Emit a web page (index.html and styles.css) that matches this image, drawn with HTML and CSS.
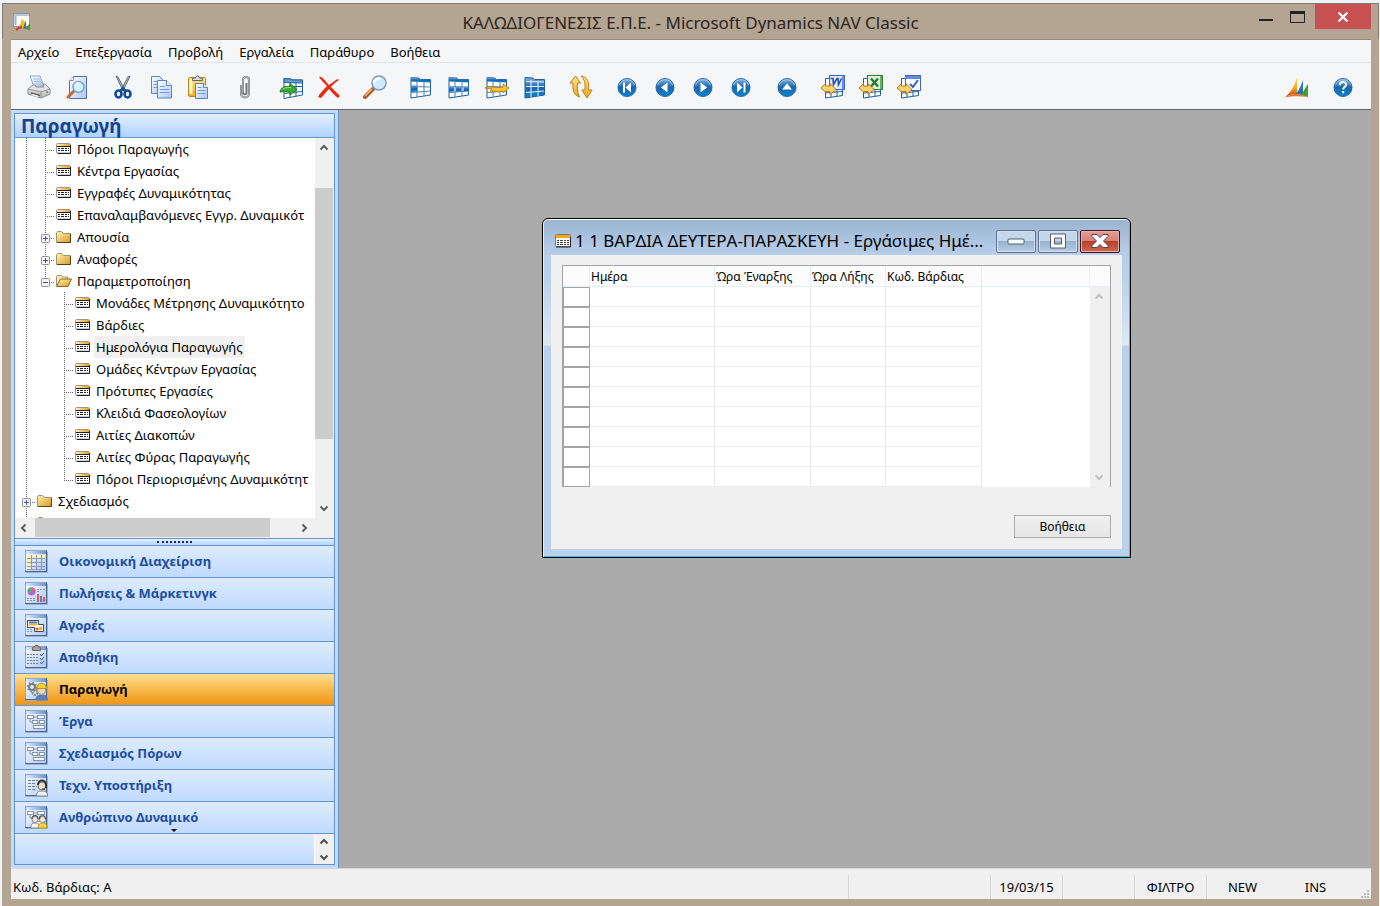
FILE: index.html
```html
<!DOCTYPE html>
<html lang="el">
<head>
    <meta charset="UTF-8">
    <meta name="viewport" content="width=device-width, initial-scale=1.0">
    <title>Microsoft Dynamics NAV Classic</title>
    <link rel="stylesheet" href="styles.css">
</head>
<body>
    <svg class="defs" width="0" height="0" aria-hidden="true">
        <defs>
            <linearGradient id="blue" x1="0" y1="0" x2="0" y2="1"><stop offset="0" stop-color="#7fb0dc"/><stop offset=".5" stop-color="#1a67ad"/><stop offset="1" stop-color="#0a84cc"/></linearGradient>
            <linearGradient id="sheet" x1="0" y1="0" x2="1" y2="1"><stop offset="0" stop-color="#fff"/><stop offset="1" stop-color="#a9c6ee"/></linearGradient>
            <linearGradient id="gold" x1="0" y1="0" x2="1" y2="1"><stop offset="0" stop-color="#fff3b8"/><stop offset="1" stop-color="#d99a1c"/></linearGradient>
            <linearGradient id="goldbar" x1="0" y1="0" x2="1" y2="0"><stop offset="0" stop-color="#fdf0c8"/><stop offset="1" stop-color="#f0a010"/></linearGradient>
            <linearGradient id="yellow" x1="0" y1="0" x2="0" y2="1"><stop offset="0" stop-color="#ffe68a"/><stop offset="1" stop-color="#f0a81c"/></linearGradient>
            <linearGradient id="gray" x1="0" y1="0" x2="0" y2="1"><stop offset="0" stop-color="#fafafa"/><stop offset="1" stop-color="#b4b4b4"/></linearGradient>
            <linearGradient id="bar" x1="0" y1="0" x2="1" y2="0"><stop offset="0" stop-color="#dfeafa"/><stop offset="1" stop-color="#6d93cc"/></linearGradient>
            <linearGradient id="flame" x1="0" y1="0" x2="0" y2="1"><stop offset="0" stop-color="#ffd94a"/><stop offset=".55" stop-color="#f7a81b"/><stop offset="1" stop-color="#c8321a"/></linearGradient>
        </defs>

        <!-- tree guides -->
        <symbol id="g-line" viewBox="0 0 19 22"><path d="M9.500 0V22" stroke="#666" stroke-dasharray="1 1"/></symbol>
        <symbol id="g-tee" viewBox="0 0 19 22"><path d="M9.500 0V22M11 12.500H19" stroke="#666" stroke-dasharray="1 1"/></symbol>
        <symbol id="g-end" viewBox="0 0 19 22"><path d="M9.500 0V13M11 12.500H19" stroke="#666" stroke-dasharray="1 1"/></symbol>
        <symbol id="g-plus" viewBox="0 0 19 22"><path d="M9.500 0V22M15 12.500H19" stroke="#666" stroke-dasharray="1 1"/><rect x="5.500" y="8.500" width="8" height="8" rx="1" fill="#f6f6f6" stroke="#919191"/><path d="M7 12.500H12M9.500 10V15" stroke="#3b56a3"/></symbol>
        <symbol id="g-minus" viewBox="0 0 19 22"><path d="M9.500 0V8M15 12.500H19" stroke="#666" stroke-dasharray="1 1"/><rect x="5.500" y="8.500" width="8" height="8" rx="1" fill="#f6f6f6" stroke="#919191"/><path d="M7 12.500H12" stroke="#3b56a3"/></symbol>
        <symbol id="t-form" viewBox="0 0 20 22"><rect x="1.500" y="5.500" width="14" height="10" rx="1" fill="#fff" stroke="#99958a"/><rect x="2" y="6" width="13" height="2" fill="url(#goldbar)"/><path d="M2 8.500H15" stroke="#222"/><path d="M3 10.500H14M3 12.500H14" stroke="#222" stroke-dasharray="2 1 3 1"/><path d="M2 14.500H15" stroke="#c3cfe6"/><path d="M15.500 7V15.500H3" fill="none" stroke="#222"/></symbol>
        <symbol id="t-folder" viewBox="0 0 20 22"><path d="M1.500 16.500V6.500l1-1h4l2 2h7v9z" fill="url(#gold)" stroke="#a8906a"/><path d="M15.500 8V16.500H2" fill="none" stroke="#55431c"/></symbol>
        <symbol id="t-open" viewBox="0 0 20 22"><path d="M1.500 15.500V6.500l1-1h4l1 1.500h5v3" fill="#fbe7a6" stroke="#a8906a"/><path d="M1.500 16.500l4-7.500h11l-3.500 7.500z" fill="url(#gold)" stroke="#8a6a26"/></symbol>

        <!-- toolbar -->
        <symbol id="i-print" viewBox="0 0 24 24"><path d="M3 1h10l4 11H7z" fill="url(#sheet)" stroke="#8fa9d0"/><path d="M6 4h7M7 6.500h7M8 9h7" stroke="#a9c0e6"/><path d="M1 14l5-4h2l1 2h8l-1-3h2l5 5v5l-9 4-13-4z" fill="url(#gray)" stroke="#8b8b8b"/><path d="M1 14l13 3 9-3M14 17v6" fill="none" stroke="#999"/><path d="M4 18l9 2.500" stroke="#555" stroke-width="1.500"/><path d="M4 20l7 2v-1.500l-6-1.500z" fill="#fff"/><circle cx="20" cy="17" r="1" fill="#49a33c"/></symbol>
        <symbol id="i-preview" viewBox="0 0 24 24"><path d="M8.500 1.500H21.500V23.500H4.500V5.500z" fill="url(#sheet)" stroke="#4c74b5"/><path d="M4.500 5.500h4v-4" fill="#fff" stroke="#7794c4"/><path d="M9 16L3 22" stroke="#c9692b" stroke-width="3" stroke-linecap="round"/><circle cx="13.500" cy="12" r="5.500" fill="#d3f0fd" stroke="#7aa6cc" stroke-width="1.500"/><path d="M10 11c1-2 2-3 4-3" fill="none" stroke="#fff" stroke-width="2"/></symbol>
        <symbol id="i-cut" viewBox="0 0 24 24"><path d="M5 1l2 1 7 13-2 1zM19 1l-2 1-7 13 2 1z" fill="#b6bfca" stroke="#48535f" stroke-width=".8"/><g fill="none" stroke="#0e4aa0" stroke-width="2.600"><ellipse cx="7.500" cy="19" rx="3" ry="3.500"/><ellipse cx="16.500" cy="19" rx="3" ry="3.500"/></g><path d="M9 16l3-3 3 3" fill="none" stroke="#0e4aa0" stroke-width="2"/></symbol>
        <symbol id="i-copy" viewBox="0 0 24 24"><path d="M2.500 1.500h8l4 4v13h-12z" fill="url(#sheet)" stroke="#5b83c6"/><path d="M4.500 6.500h6M4.500 9.500h6M4.500 12.500h4" stroke="#6c9ce0"/><path d="M8.500 5.500h9l5 5v12.500h-14z" fill="url(#sheet)" stroke="#5b83c6"/><path d="M17.500 5.500v5h5" fill="#fff" stroke="#5b83c6"/><path d="M11 11.500h5M11 14.500h9M11 17.500h9" stroke="#6c9ce0"/></symbol>
        <symbol id="i-paste" viewBox="0 0 24 24"><rect x="1.500" y="2.500" width="17" height="19" rx="1.500" fill="url(#yellow)" stroke="#b58a22"/><path d="M4 5v14" stroke="#fff4bf" stroke-width="3"/><path d="M5.500 5.500v-2l3-.5 1-2h2l1 2 3 .5v2z" fill="#ddd" stroke="#666"/><path d="M8.500 8.500h8l4 4v11h-12z" fill="url(#sheet)" stroke="#5b83c6"/><path d="M16.500 8.500v4h4" fill="#fff" stroke="#5b83c6"/><path d="M10.500 12.500h4M10.500 15.500h8M10.500 18.500h8" stroke="#6c9ce0"/></symbol>
        <symbol id="i-clip" viewBox="0 0 24 24"><path d="M8 10v8.500a4 4 0 0 0 8 0V5a3 3 0 0 0-6 0v12.500a1.500 1.500 0 0 0 3.500 0V8" fill="none" stroke="#777" stroke-width="2"/><path d="M8 10v8.500a4 4 0 0 0 8 0V5a3 3 0 0 0-6 0v12.500" fill="none" stroke="#d5d5d5" stroke-width=".7"/></symbol>
        <symbol id="i-grid" viewBox="0 0 24 24"><path d="M2 2.500l8 .5 1.500 1.500H21.500V20L2 23z" fill="#fff" stroke="#205f9f"/><path d="M2 2.500l8 .5 1.500 1.500h10v3L2 6.500z" fill="url(#blue)"/><path d="M2 11.500l19.500.500M2 17.500l19.500-1.500M8 6v16M15 7v14" fill="none" stroke="#4a80b8"/></symbol>
        <symbol id="i-post" viewBox="0 0 24 24"><g stroke="#205f9f"><path d="M5 3.500l7 .5 1 1h10.500V20L5 23.500z" fill="#fff"/><path d="M5 3.500l7 .5 1 1h10.500v3L5 7.500z" fill="#6a9dcc"/><path d="M5 18.500l18-2M17 8v13M11 8v14M13 11.500h10" fill="none"/></g><path d="M1 17c1-5 5-6 10-5.500V8.500l7 6-7 5.500v-3c-4-.5-7-.5-10 0z" fill="#39ad2d" stroke="#1d7a1a"/><path d="M4 14c2-1.500 5-1.500 8-1.500" fill="none" stroke="#a5e592"/></symbol>
        <symbol id="i-delete" viewBox="0 0 24 24"><path d="M2 2c3-2 7 5 10 8 3-2 6-5 9-6l1 1c-3 2-6 4-8 7 3 3 6 6 9 9l-2 2c-3-2-6-6-9-9-3 3-5 6-8 9l-3-1c2-4 6-8 9-11-3-3-6-6-8-9z" fill="#ea2b10"/></symbol>
        <symbol id="i-zoom" viewBox="0 0 24 24"><path d="M10 14L2 22" stroke="#b15d2a" stroke-width="4" stroke-linecap="round"/><path d="M9 14L2 21" stroke="#f4b57c" stroke-width="1.500"/><circle cx="16" cy="8" r="7" fill="#c9edff" stroke="#8e94ba" stroke-width="1.500"/><path d="M11 8c0-3 3-5 6-4" fill="none" stroke="#fff" stroke-width="2.500"/></symbol>
        <symbol id="i-t1" viewBox="0 0 24 24"><use href="#i-grid"/><path d="M2 10l6.500.500v6L2 17z" fill="url(#blue)"/></symbol>
        <symbol id="i-t2" viewBox="0 0 24 24"><use href="#i-grid"/><path d="M2 11.500h5v5l-5 .5zM9 11.500h5.500v5l-5.500.5zM16.500 12h5v4l-5 .5z" fill="url(#blue)"/></symbol>
        <symbol id="i-t3" viewBox="0 0 24 24"><use href="#i-grid"/><path d="M0 13c5-3 11 1 18-1V9l6 4-6 5v-2c-6 1.500-9 0-13 0l2-2z" fill="#ffc52e" stroke="#b97b0a" stroke-width=".9"/></symbol>
        <symbol id="i-t4" viewBox="0 0 24 24"><path d="M2 2.500l8 .5 1.500 1.500H21.500V20L2 23z" fill="url(#blue)" stroke="#205f9f"/><path d="M3 6.500l18 .5M3 11.500h18M3 17.500l18-1.500M8 5v17M15 6v15" fill="none" stroke="#eaf3fb"/></symbol>
        <symbol id="i-sort" viewBox="0 0 24 24"><g fill="url(#yellow)" stroke="#bd7b12"><path d="M6.500 1l5 7h-3c-.5 5-.5 9 2 14-6-2-7-7-6.500-14H1z"/><path d="M12 1c7 1 8 6 7.500 14H23l-5 8-5-8h3c.5-6 0-10-4-14z"/></g></symbol>
        <symbol id="i-disc" viewBox="0 0 24 24"><circle cx="12" cy="12.500" r="9" fill="url(#blue)" stroke="#2367a6"/><path d="M4.500 10a8 8 0 0 1 15 0" fill="none" stroke="#c6def2" stroke-opacity=".7"/></symbol>
        <symbol id="i-first" viewBox="0 0 24 24"><use href="#i-disc"/><path d="M8 7.500h2v10H8zM16 7.500v10l-5.500-5z" fill="#fff"/></symbol>
        <symbol id="i-prev" viewBox="0 0 24 24"><use href="#i-disc"/><path d="M14.500 7.500v10l-6.500-5z" fill="#fff"/></symbol>
        <symbol id="i-next" viewBox="0 0 24 24"><use href="#i-disc"/><path d="M9.500 7.500v10l6.500-5z" fill="#fff"/></symbol>
        <symbol id="i-last" viewBox="0 0 24 24"><use href="#i-disc"/><path d="M14.500 7.500h2v10h-2zM8 7.500v10l5.500-5z" fill="#fff"/></symbol>
        <symbol id="i-up" viewBox="0 0 24 24"><use href="#i-disc"/><path d="M7 14.500h10l-5-6z" fill="#fff"/></symbol>
        <symbol id="i-export" viewBox="0 0 24 24"><path d="M4.500 3.500h17v17l-17 2.500z" fill="#fff" stroke="#205f9f"/><path d="M5 18l16-1.500M10 15v7M16 15v6" fill="none" stroke="#205f9f"/></symbol>
        <symbol id="i-arrows" viewBox="0 0 24 24"><path d="M0 13l4.500-4.500V11H9V8.500l6 6-6 5v-3H5v1z" fill="#ffd36a" stroke="#a96a10" stroke-width=".9"/></symbol>
        <symbol id="i-word" viewBox="0 0 24 24"><use href="#i-export"/><rect x="8.500" y=".5" width="15" height="14" fill="#dfe9fc" stroke="#3f66c4"/><path d="M22 1v13" stroke="#6d90dc" stroke-width="2"/><path d="M9.500 3.500H12l.5 6 3.500-6h1l.5 6 3-6" fill="none" stroke="#2b4eaf" stroke-width="1.600"/><use href="#i-arrows"/></symbol>
        <symbol id="i-excel" viewBox="0 0 24 24"><use href="#i-export"/><rect x="8.500" y=".5" width="15" height="14" fill="#dff1dc" stroke="#2f7d32"/><path d="M22 1v13" stroke="#6cae68" stroke-width="2"/><path d="M12 3.500l7 8M19 3.500l-7 8" stroke="#257a2a" stroke-width="2.300"/><use href="#i-arrows"/></symbol>
        <symbol id="i-task" viewBox="0 0 24 24"><use href="#i-export"/><rect x="8.500" y=".5" width="15" height="15" fill="#fff" stroke="#3f66c4"/><path d="M8 1h15v3H8z" fill="#5f8bea"/><path d="M13 9l3 3 5-7" fill="none" stroke="#2d62c4" stroke-width="2"/><use href="#i-arrows"/></symbol>
        <symbol id="i-nav" viewBox="0 0 24 24"><path d="M0 22c5-4 9-9 12-20v17c-4 0-8 1-12 3z" fill="url(#flame)"/><path d="M11 19c3-4 5-8 7-14v15z" fill="#2573b8"/><path d="M16 20c3-4 4-7 7-11v13z" fill="#4c9a2a"/><path d="M0 22.500c6-4 13-5 22-.5-7-1-15-1-22 .5z" fill="#e0762a"/></symbol>
        <symbol id="i-help" viewBox="0 0 24 24"><use href="#i-disc"/><path d="M8.800 10.200c0-4.200 6.600-4 6.400-.5-.1 2-3 2.300-3 4.800" fill="none" stroke="#fff" stroke-width="2"/><rect x="11" y="16" width="2.200" height="2.200" fill="#fff"/></symbol>

        <!-- departments -->
        <symbol id="n-frame" viewBox="0 0 24 24"><path d="M2 23.500h21.500V3" fill="none" stroke="#9bb1d4"/><rect x="1.500" y="1.500" width="21" height="21" fill="url(#sheet)" stroke="#4b678f"/><rect x="2" y="2" width="20" height="3" fill="url(#bar)"/><path d="M1.500 22V1.500H22" fill="none" stroke="#8aa5cf"/></symbol>
        <symbol id="n-finance" viewBox="0 0 24 24"><use href="#n-frame"/><path d="M3 6h18v4H3zM3 10h4v10H3z" fill="#fbf3b4"/><path d="M3 9.500h18M3 13.500h18M3 17.500h18M3 20.500h18M7.500 6v15M12.500 6v15M17.500 6v15" stroke="#8c9aba"/></symbol>
        <symbol id="n-sales" viewBox="0 0 24 24"><use href="#n-frame"/><circle cx="7.500" cy="10.500" r="4" fill="#a96fd0"/><path d="M7.500 10.500v-4a4 4 0 0 1 4 4z" fill="#e35d8b"/><path d="M7.500 10.500h-4a4 4 0 0 1 4-4z" fill="#4bb37a"/><path d="M13 8.500h8M13 10.500h3M3 17.500h8M3 19.500h8" stroke="#8696b5" stroke-dasharray="2 1"/><path d="M14 21v-8M20 21v-5" stroke="#d6604a" stroke-width="2"/><path d="M17 21v-6" stroke="#6f6fce" stroke-width="2"/></symbol>
        <symbol id="n-purchase" viewBox="0 0 24 24"><use href="#n-frame"/><path d="M3 16.500h6M3 18.500h6" stroke="#8696b5" stroke-dasharray="2 1"/><rect x="3.500" y="7.500" width="11" height="7" fill="#fff" stroke="#444b58"/><path d="M5 9.500h8" stroke="#3b78d0" stroke-width="2"/><path d="M5 11.500h8" stroke="#f0b41c" stroke-width="2"/><path d="M15 11.500h4.500v7h-9V15" fill="#fff" stroke="#444b58"/><circle cx="13" cy="16" r="1.500" fill="#e8502e"/><circle cx="16.500" cy="15.500" r="2" fill="#f2b51c"/></symbol>
        <symbol id="n-store" viewBox="0 0 24 24"><use href="#n-frame"/><path d="M3 9.500h11M3 12.500h11M3 15.500h11M3 18.500h11" stroke="#6f81a8" stroke-dasharray="2 1"/><path d="M16 9l1.500 2 2.500-3M16 13l1.500 2 2.500-3M16 17l1.500 2 2.500-3" fill="none" stroke="#4c5f8a"/><path d="M8.500 5.500v-3l2-.5.500-1.500h3l.5 1.500 2 .5v3z" fill="#a9a196" stroke="#6e675d"/></symbol>
        <symbol id="n-prod" viewBox="0 0 24 24"><use href="#n-frame"/><circle cx="8" cy="10" r="3" fill="none" stroke="#7b7f86" stroke-width="2"/><circle cx="8" cy="10" r="4.500" fill="none" stroke="#7b7f86" stroke-width="1.500" stroke-dasharray="1.500 2"/><circle cx="11" cy="15.500" r="2.500" fill="none" stroke="#7b7f86" stroke-width="2" stroke-dasharray="2 1"/><path d="M12 23c0-4 2-5 5.500-5s6 1 6 5z" fill="#5d7fc0" stroke="#5a75ae"/><circle cx="17.500" cy="13.500" r="4" fill="#f2d7b0" stroke="#998"/><path d="M12.500 11.500c0-7 10-7 10 0z" fill="#f8cf2e" stroke="#b8951f"/></symbol>
        <symbol id="n-jobs" viewBox="0 0 24 24"><use href="#n-frame"/><g fill="#fff" stroke="#8395ae"><path d="M6 9v4h3M9 8h5M13 14h3" fill="none"/><rect x="3.500" y="6.500" width="6" height="3"/><rect x="13.500" y="6.500" width="7" height="3"/><rect x="8.500" y="11.500" width="5" height="3"/><rect x="15.500" y="11.500" width="5" height="3"/><rect x="9.500" y="16.500" width="11" height="3"/></g></symbol>
        <symbol id="n-service" viewBox="0 0 24 24"><use href="#n-frame"/><path d="M4 7.500h10M4 10.500h7M4 13.500h9M4 16.500h7" stroke="#6f81a8" stroke-dasharray="3 1"/><path d="M12.500 23c0-4 2-5 5.500-5s5.500 1 5.500 5z" fill="#eef0f2" stroke="#888"/><circle cx="18" cy="13" r="4" fill="#f1dcc4" stroke="#777"/><path d="M14 12c0-6 8-6 8 0v3" fill="none" stroke="#333" stroke-width="2"/><path d="M18 16h3" stroke="#222"/></symbol>
        <symbol id="n-hr" viewBox="0 0 24 24"><use href="#n-jobs"/><path d="M7 23c0-4 1-5 4.500-5s4 1 4 5z" fill="#f2f2f2" stroke="#888"/><path d="M14.500 23c0-4 1-5 4-5s4.500 1 4.500 5z" fill="#f7d43a" stroke="#b8951f"/><circle cx="11" cy="14.500" r="3" fill="#f5e8d8" stroke="#888"/><circle cx="18.500" cy="14.500" r="3" fill="#f5e8d8" stroke="#888"/><path d="M8 14c0-5 6-5 6 0M15.500 14c0-5 6-5 6 0" fill="none" stroke="#444"/></symbol>

        <!-- scroll arrows -->
        <symbol id="a-up" viewBox="0 0 10 10"><path d="M1.500 6.500L5 3l3.500 3.500" fill="none" stroke="currentColor" stroke-width="2"/></symbol>
        <symbol id="a-down" viewBox="0 0 10 10"><path d="M1.500 3.500L5 7l3.500-3.500" fill="none" stroke="currentColor" stroke-width="2"/></symbol>
        <symbol id="a-left" viewBox="0 0 10 10"><path d="M6.500 1.500L3 5l3.500 3.500" fill="none" stroke="currentColor" stroke-width="2"/></symbol>
        <symbol id="a-right" viewBox="0 0 10 10"><path d="M3.500 1.500L7 5 3.500 8.500" fill="none" stroke="currentColor" stroke-width="2"/></symbol>
    </svg>

    <div class="window">
        <header class="titlebar">
            <svg class="app-icon" viewBox="0 0 20 20"><rect x="1.500" y="1.500" width="16" height="13" fill="#fff" stroke="#8a97a8"/><path d="M2 3h15" stroke="#b9c6d6" stroke-width="2"/><path d="M3.500 4v9" stroke="#8fb2de" stroke-width="2"/><path d="M4 18c3-2 5-6 6-12v10z" fill="#f5a71b"/><path d="M10 7l3 3v6h-3z" fill="#f5c21b"/><path d="M4 18c2-2 4-3 6-3" fill="none" stroke="#cf3b1c" stroke-width="2"/><path d="M11 16l3-8v9z" fill="#2573b8"/><path d="M13 17l5-6v7z" fill="#4c9a2a"/></svg>
            <h1>ΚΑΛΩΔΙΟΓΕΝΕΣΙΣ Ε.Π.Ε. - Microsoft Dynamics NAV Classic</h1>
            <div class="window-buttons">
                <button class="win-min" aria-label="Ελαχιστοποίηση"><svg width="14" height="3"><rect width="14" height="2" fill="#222"/></svg></button>
                <button class="win-max" aria-label="Μεγιστοποίηση"><svg width="15" height="12"><path d="M.5 1V11.500H14.500V1M0 1.500H15" fill="none" stroke="#222"/><rect width="15" height="3" fill="#222"/></svg></button>
                <button class="win-close" aria-label="Κλείσιμο"><svg width="12" height="10"><path d="M1.500.5l9 9M10.500.5l-9 9" stroke="#fff" stroke-width="2.200"/></svg></button>
            </div>
        </header>

        <div class="frame">
            <nav class="menu">
                <a href="#">Αρχείο</a>
                <a href="#">Επεξεργασία</a>
                <a href="#">Προβολή</a>
                <a href="#">Εργαλεία</a>
                <a href="#">Παράθυρο</a>
                <a href="#">Βοήθεια</a>
            </nav>

            <div class="toolbar">
                <div class="group">
                    <button aria-label="Εκτύπωση"><svg><use href="#i-print"/></svg></button>
                    <button aria-label="Προεπισκόπηση"><svg><use href="#i-preview"/></svg></button>
                </div>
                <div class="group">
                    <button aria-label="Αποκοπή"><svg><use href="#i-cut"/></svg></button>
                    <button aria-label="Αντιγραφή"><svg><use href="#i-copy"/></svg></button>
                    <button aria-label="Επικόλληση"><svg><use href="#i-paste"/></svg></button>
                </div>
                <div class="group">
                    <button aria-label="Συνημμένα"><svg><use href="#i-clip"/></svg></button>
                </div>
                <div class="group">
                    <button aria-label="Εισαγωγή"><svg><use href="#i-post"/></svg></button>
                    <button aria-label="Διαγραφή"><svg><use href="#i-delete"/></svg></button>
                </div>
                <div class="group">
                    <button aria-label="Εύρεση"><svg><use href="#i-zoom"/></svg></button>
                </div>
                <div class="group">
                    <button aria-label="Φίλτρο πεδίου"><svg><use href="#i-t1"/></svg></button>
                    <button aria-label="Φίλτρο πίνακα"><svg><use href="#i-t2"/></svg></button>
                    <button aria-label="Φίλτρο ροής"><svg><use href="#i-t3"/></svg></button>
                    <button aria-label="Εμφάνιση όλων"><svg><use href="#i-t4"/></svg></button>
                </div>
                <div class="group">
                    <button aria-label="Ταξινόμηση"><svg><use href="#i-sort"/></svg></button>
                </div>
                <div class="group">
                    <button aria-label="Πρώτη"><svg><use href="#i-first"/></svg></button>
                    <button aria-label="Προηγούμενη"><svg><use href="#i-prev"/></svg></button>
                    <button aria-label="Επόμενη"><svg><use href="#i-next"/></svg></button>
                    <button aria-label="Τελευταία"><svg><use href="#i-last"/></svg></button>
                </div>
                <div class="group">
                    <button aria-label="Λίστα"><svg><use href="#i-up"/></svg></button>
                </div>
                <div class="group">
                    <button aria-label="Word"><svg><use href="#i-word"/></svg></button>
                    <button aria-label="Excel"><svg><use href="#i-excel"/></svg></button>
                    <button aria-label="Εργασία"><svg><use href="#i-task"/></svg></button>
                </div>
                <div class="group right">
                    <button aria-label="Dynamics NAV"><svg><use href="#i-nav"/></svg></button>
                </div>
                <div class="group">
                    <button aria-label="Βοήθεια"><svg><use href="#i-help"/></svg></button>
                </div>
            </div>

            <main class="workspace">
                <aside class="sidebar">
                    <div class="pane">
                        <h2>Παραγωγή</h2>
                        <div class="tree-box">
                            <div class="tree-view">
                                <ul class="tree">
                                    <li><svg class="guide"><use href="#g-line"/></svg><svg class="guide"><use href="#g-tee"/></svg><svg class="node"><use href="#t-form"/></svg><a href="#">Πόροι Παραγωγής</a></li>
                                    <li><svg class="guide"><use href="#g-line"/></svg><svg class="guide"><use href="#g-tee"/></svg><svg class="node"><use href="#t-form"/></svg><a href="#">Κέντρα Εργασίας</a></li>
                                    <li><svg class="guide"><use href="#g-line"/></svg><svg class="guide"><use href="#g-tee"/></svg><svg class="node"><use href="#t-form"/></svg><a href="#">Εγγραφές Δυναμικότητας</a></li>
                                    <li><svg class="guide"><use href="#g-line"/></svg><svg class="guide"><use href="#g-tee"/></svg><svg class="node"><use href="#t-form"/></svg><a href="#">Επαναλαμβανόμενες Εγγρ. Δυναμικότ</a></li>
                                    <li><svg class="guide"><use href="#g-line"/></svg><svg class="guide"><use href="#g-plus"/></svg><svg class="node"><use href="#t-folder"/></svg><a href="#">Απουσία</a></li>
                                    <li><svg class="guide"><use href="#g-line"/></svg><svg class="guide"><use href="#g-plus"/></svg><svg class="node"><use href="#t-folder"/></svg><a href="#">Αναφορές</a></li>
                                    <li><svg class="guide"><use href="#g-line"/></svg><svg class="guide"><use href="#g-minus"/></svg><svg class="node"><use href="#t-open"/></svg><a href="#">Παραμετροποίηση</a></li>
                                    <li><svg class="guide"><use href="#g-line"/></svg><svg class="guide"></svg><svg class="guide"><use href="#g-tee"/></svg><svg class="node"><use href="#t-form"/></svg><a href="#">Μονάδες Μέτρησης Δυναμικότητο</a></li>
                                    <li><svg class="guide"><use href="#g-line"/></svg><svg class="guide"></svg><svg class="guide"><use href="#g-tee"/></svg><svg class="node"><use href="#t-form"/></svg><a href="#">Βάρδιες</a></li>
                                    <li><svg class="guide"><use href="#g-line"/></svg><svg class="guide"></svg><svg class="guide"><use href="#g-tee"/></svg><svg class="node"><use href="#t-form"/></svg><a class="selected" href="#">Ημερολόγια Παραγωγής</a></li>
                                    <li><svg class="guide"><use href="#g-line"/></svg><svg class="guide"></svg><svg class="guide"><use href="#g-tee"/></svg><svg class="node"><use href="#t-form"/></svg><a href="#">Ομάδες Κέντρων Εργασίας</a></li>
                                    <li><svg class="guide"><use href="#g-line"/></svg><svg class="guide"></svg><svg class="guide"><use href="#g-tee"/></svg><svg class="node"><use href="#t-form"/></svg><a href="#">Πρότυπες Εργασίες</a></li>
                                    <li><svg class="guide"><use href="#g-line"/></svg><svg class="guide"></svg><svg class="guide"><use href="#g-tee"/></svg><svg class="node"><use href="#t-form"/></svg><a href="#">Κλειδιά Φασεολογίων</a></li>
                                    <li><svg class="guide"><use href="#g-line"/></svg><svg class="guide"></svg><svg class="guide"><use href="#g-tee"/></svg><svg class="node"><use href="#t-form"/></svg><a href="#">Αιτίες Διακοπών</a></li>
                                    <li><svg class="guide"><use href="#g-line"/></svg><svg class="guide"></svg><svg class="guide"><use href="#g-tee"/></svg><svg class="node"><use href="#t-form"/></svg><a href="#">Αιτίες Φύρας Παραγωγής</a></li>
                                    <li><svg class="guide"><use href="#g-line"/></svg><svg class="guide"></svg><svg class="guide"><use href="#g-end"/></svg><svg class="node"><use href="#t-form"/></svg><a href="#">Πόροι Περιορισμένης Δυναμικότητ</a></li>
                                    <li><svg class="guide"><use href="#g-plus"/></svg><svg class="node"><use href="#t-folder"/></svg><a href="#">Σχεδιασμός</a></li>
                                    <li><svg class="guide"><use href="#g-plus"/></svg><svg class="node"><use href="#t-folder"/></svg></li>
                                </ul>
                            </div>
                            <div class="vscroll">
                                <svg><use href="#a-up"/></svg>
                                <div class="track">
                                    <div class="before"></div>
                                    <div class="thumb"></div>
                                    <div class="after"></div>
                                </div>
                                <svg><use href="#a-down"/></svg>
                            </div>
                        </div>
                        <div class="hscroll">
                            <svg><use href="#a-left"/></svg>
                            <div class="track"><div class="thumb"></div></div>
                            <svg><use href="#a-right"/></svg>
                        </div>
                        <div class="splitter"><span></span></div>
                        <nav class="departments">
                            <a href="#"><svg><use href="#n-finance"/></svg>Οικονομική Διαχείριση</a>
                            <a href="#"><svg><use href="#n-sales"/></svg>Πωλήσεις &amp; Μάρκετινγκ</a>
                            <a href="#"><svg><use href="#n-purchase"/></svg>Αγορές</a>
                            <a href="#"><svg><use href="#n-store"/></svg>Αποθήκη</a>
                            <a class="active" href="#"><svg><use href="#n-prod"/></svg>Παραγωγή</a>
                            <a href="#"><svg><use href="#n-jobs"/></svg>Έργα</a>
                            <a href="#"><svg><use href="#n-jobs"/></svg>Σχεδιασμός Πόρων</a>
                            <a href="#"><svg><use href="#n-service"/></svg>Τεχν. Υποστήριξη</a>
                            <a class="more" href="#"><svg><use href="#n-hr"/></svg>Ανθρώπινο Δυναμικό</a>
                        </nav>
                        <div class="pane-footer">
                            <div class="spin">
                                <svg><use href="#a-up"/></svg>
                                <svg><use href="#a-down"/></svg>
                            </div>
                        </div>
                    </div>
                </aside>

                <section class="desktop">
                    <div class="dialog">
                        <div class="dialog-title">
                            <svg class="dialog-icon" viewBox="0 0 18 16"><rect x="1.500" y="1.500" width="15" height="12" rx="1" fill="#fff" stroke="#777"/><rect x="2" y="2" width="14" height="3" fill="#fba90f"/><path d="M3 7.500h12M3 9.500h12M3 11.500h12" stroke="#444" stroke-dasharray="2 1 3 1"/><path d="M16.500 4v10H2" fill="none" stroke="#222"/></svg>
                            <h3>1 1 ΒΑΡΔΙΑ ΔΕΥΤΕΡΑ-ΠΑΡΑΣΚΕΥΗ - Εργάσιμες Ημέ...</h3>
                            <button aria-label="Ελαχιστοποίηση"><svg width="18" height="8"><rect x="1" y="2" width="16" height="5" rx="1" fill="#fff" stroke="#555e6b"/></svg></button>
                            <button aria-label="Μεγιστοποίηση"><svg width="18" height="16"><path d="M1.500 1h15v14h-15zM5.500 5v6h7V5z" fill="#fff" fill-rule="evenodd" stroke="#555e6b"/></svg></button>
                            <button class="close" aria-label="Κλείσιμο"><svg width="18" height="16"><path d="M1 1.500h5l3 3 3-3h5v2L12.500 8l4.500 4.500v2h-5l-3-3-3 3H1v-2L5.500 8 1 3.500z" fill="#fff" stroke="#5b4048"/></svg></button>
                        </div>
                        <div class="dialog-body">
                            <div class="grid">
                                <table>
                                    <colgroup>
                                        <col class="c-select"><col class="c-day"><col class="c-start"><col class="c-end"><col class="c-code"><col>
                                    </colgroup>
                                    <thead>
                                        <tr><th></th><th>Ημέρα</th><th>Ώρα Έναρξης</th><th>Ώρα Λήξης</th><th>Κωδ. Βάρδιας</th><th></th></tr>
                                    </thead>
                                    <tbody>
                                        <tr><td></td><td></td><td></td><td></td><td></td><td></td></tr>
                                        <tr><td></td><td></td><td></td><td></td><td></td><td></td></tr>
                                        <tr><td></td><td></td><td></td><td></td><td></td><td></td></tr>
                                        <tr><td></td><td></td><td></td><td></td><td></td><td></td></tr>
                                        <tr><td></td><td></td><td></td><td></td><td></td><td></td></tr>
                                        <tr><td></td><td></td><td></td><td></td><td></td><td></td></tr>
                                        <tr><td></td><td></td><td></td><td></td><td></td><td></td></tr>
                                        <tr><td></td><td></td><td></td><td></td><td></td><td></td></tr>
                                        <tr><td></td><td></td><td></td><td></td><td></td><td></td></tr>
                                        <tr><td></td><td></td><td></td><td></td><td></td><td></td></tr>
                                    </tbody>
                                </table>
                                <div class="grid-side">
                                    <div class="grid-corner"></div>
                                    <div class="grid-scroll">
                                        <svg><use href="#a-up"/></svg>
                                        <svg><use href="#a-down"/></svg>
                                    </div>
                                </div>
                            </div>
                            <div class="actions"><button>Βοήθεια</button></div>
                        </div>
                    </div>
                </section>
            </main>

            <footer class="status">
                <span class="field">Κωδ. Βάρδιας: A</span>
                <span class="wide"></span>
                <span>19/03/15</span>
                <span></span>
                <span>ΦΙΛΤΡΟ</span>
                <span>NEW</span>
                <span class="plain">INS</span>
                <svg class="grip" width="10" height="10"><path d="M6 1h2v2H6zM6 4h2v2H6zM3 4h2v2H3zM6 7h2v2H6zM3 7h2v2H3zM0 7h2v2H0z" fill="#bbb"/></svg>
            </footer>
        </div>
    </div>
</body>
</html>
```
FILE: styles.css
```css
* {
    box-sizing: border-box;
}
body {
    margin: 0;
    background-color: #eff3f7;
    font-family: "Noto Sans", "Open Sans", sans-serif;
    font-size: 13px;
    color: #000;
}
a {
    color: inherit;
    text-decoration: none;
}
button {
    padding: 0;
    border: none;
    background: none;
    font: inherit;
    color: inherit;
    display: flex;
    align-items: center;
    justify-content: center;
}
svg {
    display: block;
    flex: none;
}
ul {
    list-style: none;
    margin: 0;
    padding: 0;
}
.defs {
    position: absolute;
}

/* main window */
.window {
    display: flex;
    flex-direction: column;
    height: 100vh;
    min-height: 700px;
    padding: 0 1px 0 2px;
    border-top: 3px solid #eff3f7;
}
.titlebar {
    display: grid;
    grid-template-columns: 140px 1fr 140px;
    height: 36px;
    background-color: #b4a492;
    border: 1px solid #857a6d;
    border-bottom: none;
}
.app-icon {
    width: 20px;
    height: 20px;
    margin: 8px 0 0 9px;
}
.titlebar h1 {
    margin: 0;
    font-size: 17px;
    line-height: 38px;
    font-weight: normal;
    text-align: center;
    white-space: nowrap;
    color: #2b2621;
}
.window-buttons {
    display: flex;
    justify-content: flex-end;
    padding-right: 7px;
}
.window-buttons button {
    height: 25px;
}
.win-min {
    width: 27px;
    padding-top: 8px;
}
.win-max {
    width: 36px;
}
.win-close {
    width: 56px;
    background-color: #c75050;
}
.frame {
    flex: 1;
    min-height: 0;
    display: flex;
    flex-direction: column;
    border: solid #b4a492;
    border-width: 0 8px 7px 9px;
    box-shadow: inset 0 0 0 1px #978a7b;
}

/* menu and toolbar */
.menu {
    display: flex;
    gap: 16px;
    height: 24px;
    padding-left: 7px;
    line-height: 24px;
    background-color: #f5f6f8;
    border-top: 1px solid #978a7b;
    border-bottom: 1px solid #e3e5e7;
}
.toolbar {
    display: flex;
    gap: 8px;
    height: 47px;
    padding: 2px 9px 0;
    background-color: #f5f6f8;
    border-bottom: 1px solid #666;
}
.group {
    display: flex;
}
.group button {
    width: 38px;
}
.group svg {
    width: 24px;
    height: 24px;
}
.group.right {
    margin-left: auto;
}

/* navigation pane */
.workspace {
    flex: 1;
    min-height: 0;
    display: flex;
}
.sidebar {
    width: 328px;
    flex: none;
    padding: 3px;
    background-color: #bfdbff;
    border-right: 1px solid #6593cf;
}
.pane {
    display: flex;
    flex-direction: column;
    height: 100%;
    border: 1px solid #6593cf;
    background-color: #fff;
}
.pane h2 {
    margin: 0;
    height: 24px;
    padding-left: 6px;
    font-size: 19px;
    line-height: 24px;
    color: #15428b;
    background: linear-gradient(#e3efff, #afd2ff);
    border-bottom: 1px solid #6593cf;
}
.tree-box {
    flex: 1;
    min-height: 0;
    display: flex;
}
.tree-view {
    flex: 1;
    min-width: 0;
    overflow: hidden;
}
.tree {
    padding-left: 2px;
}
.tree li {
    display: flex;
    height: 22px;
    line-height: 22px;
    white-space: nowrap;
}
.tree a {
    padding: 0 2px;
}
.tree .selected {
    background-color: #f0f0f0;
}
.guide {
    width: 19px;
    height: 22px;
}
.node {
    width: 20px;
    height: 22px;
}
.vscroll,
.hscroll {
    display: flex;
    align-items: center;
    background-color: #f0f0f0;
    color: #606060;
}
.vscroll {
    width: 19px;
    flex-direction: column;
    padding: 5px 1px 5px 0;
}
.hscroll {
    height: 20px;
    padding: 0 25px 1px 4px;
}
.vscroll svg,
.hscroll svg,
.spin svg,
.grid-scroll svg {
    width: 10px;
    height: 10px;
}
.track {
    flex: 1;
    display: flex;
    align-self: stretch;
}
.vscroll .track {
    flex-direction: column;
}
.before {
    flex: 35;
}
.thumb {
    background-color: #cdcdcd;
}
.vscroll .thumb {
    flex: 251;
}
.after {
    flex: 64;
}
.hscroll .track {
    padding-left: 6px;
}
.hscroll .thumb {
    width: 89%;
}
.splitter {
    display: flex;
    align-items: center;
    justify-content: center;
    height: 8px;
    border: solid #6593cf;
    border-width: 1px 0;
    background: linear-gradient(#e3efff, #b3d4ff);
}
.splitter span {
    width: 35px;
    border-top: 2px dotted #1d2c48;
}
.departments a {
    display: flex;
    align-items: center;
    gap: 11px;
    height: 32px;
    padding: 0 0 2px 9px;
    font-weight: bold;
    color: #204d9e;
    background: linear-gradient(#deebff, #bfdaff);
    border-bottom: 1px solid #6593cf;
}
.departments svg {
    width: 24px;
    height: 24px;
}
.departments .active {
    color: #000;
    background: linear-gradient(#ffe092, #f8b74a 50%, #ee9515);
}
.departments .more {
    position: relative;
}
.departments .more::after {
    content: "";
    position: absolute;
    left: 49%;
    bottom: 1px;
    border: 3px solid transparent;
    border-top-color: #000;
    border-bottom: none;
}
.pane-footer {
    display: flex;
    justify-content: flex-end;
    height: 30px;
    background: linear-gradient(#deebff, #bfdaff);
}
.spin {
    display: flex;
    flex-direction: column;
    align-items: center;
    justify-content: space-around;
    width: 20px;
    padding-right: 2px;
    border-left: 1px solid #fff;
    background-color: #f0f0f0;
    color: #505050;
}

/* desktop with the open form */
.desktop {
    flex: 1;
    min-width: 0;
    position: relative;
    overflow: hidden;
    background-color: #ababab;
}
.dialog {
    position: absolute;
    left: 203px;
    top: 108px;
    width: 589px;
    padding: 0 8px 8px;
    border: 1px solid #000;
    border-radius: 6px 6px 0 0;
    background: linear-gradient(#9ab4d1, #b8cfe9 36px, #b9d1ea 60px, #dce8f5 126px, #b9d1ea 127px);
    box-shadow: inset 0 1px #fff, inset 1px 0 #e4f0fa, inset -1px -1px #35c5d8;
}
.dialog-title {
    display: flex;
    align-items: center;
    height: 36px;
    padding: 8px 2px 0 3px;
}
.dialog-icon {
    width: 18px;
    height: 16px;
}
.dialog-title h3 {
    flex: 1;
    min-width: 0;
    margin: 0 0 0 3px;
    font-size: 17px;
    line-height: 26px;
    font-weight: normal;
    white-space: nowrap;
}
.dialog-title button {
    width: 40px;
    height: 23px;
    margin-left: 2px;
    border: 1px solid #5e7390;
    border-radius: 2px;
    background: linear-gradient(#c3d7ea 50%, #98b3ce 50%, #b5cde4);
    box-shadow: inset 0 0 0 1px #d5e3f1;
}
.dialog-title .close {
    border-color: #43121e;
    background: linear-gradient(#e39e94, #d58176 50%, #b53f26 50%, #cf6b55);
    box-shadow: inset 0 0 0 1px #e8b0a6;
}
.dialog-body {
    padding: 10px 11px 11px;
    background-color: #f0f0f0;
}
.grid {
    display: flex;
    border: 1px solid #a3a3a8;
    border-bottom: none;
    background-color: #fff;
    font-size: 12px;
}
.grid table {
    flex: 1;
    table-layout: fixed;
    border-collapse: separate;
    border-spacing: 0;
}
.c-select {
    width: 27px;
}
.c-day {
    width: 125px;
}
.c-start,
.c-code {
    width: 96px;
}
.c-end {
    width: 75px;
}
.grid th {
    height: 21px;
    padding: 2px 0 0 1px;
    line-height: 18px;
    font-weight: normal;
    text-align: left;
    white-space: nowrap;
    background-color: #fcfcfc;
    border: solid #e5effa;
    border-width: 0 1px 1px 0;
}
.grid td {
    height: 20px;
    padding: 0;
    border: solid #ececec;
    border-width: 0 1px 1px 0;
}
.grid td:first-child {
    border: 1px solid #a3a3a8;
}
.grid td:last-child {
    border: none;
}
.grid-side {
    display: flex;
    flex-direction: column;
    width: 20px;
}
.grid-corner {
    height: 21px;
    border-bottom: 1px solid #e5effa;
    background-color: #fcfcfc;
}
.grid-scroll {
    flex: 1;
    display: flex;
    flex-direction: column;
    align-items: center;
    justify-content: space-between;
    padding: 5px 2px 5px 0;
    background-color: #f0f0f0;
    color: #bfbfbf;
}
.actions {
    display: flex;
    justify-content: flex-end;
    padding-top: 28px;
}
.actions button {
    width: 97px;
    height: 23px;
    border: 1px solid #acacac;
    background: linear-gradient(#f0f0f0, #e5e5e5);
    font-size: 12px;
}

/* status bar */
.status {
    display: flex;
    align-items: flex-end;
    height: 31px;
    background-color: #f0f0f0;
    border-top: 1px solid #d7d7d7;
}
.status span {
    width: 72px;
    height: 24px;
    line-height: 24px;
    text-align: center;
    border-left: 1px solid #d7d7d7;
}
.status .field {
    flex: 1;
    padding-left: 2px;
    text-align: left;
    border: none;
}
.status .wide {
    width: 142px;
}
.status .plain {
    width: 75px;
    border: none;
}
.grip {
    margin-left: 8px;
}
```
